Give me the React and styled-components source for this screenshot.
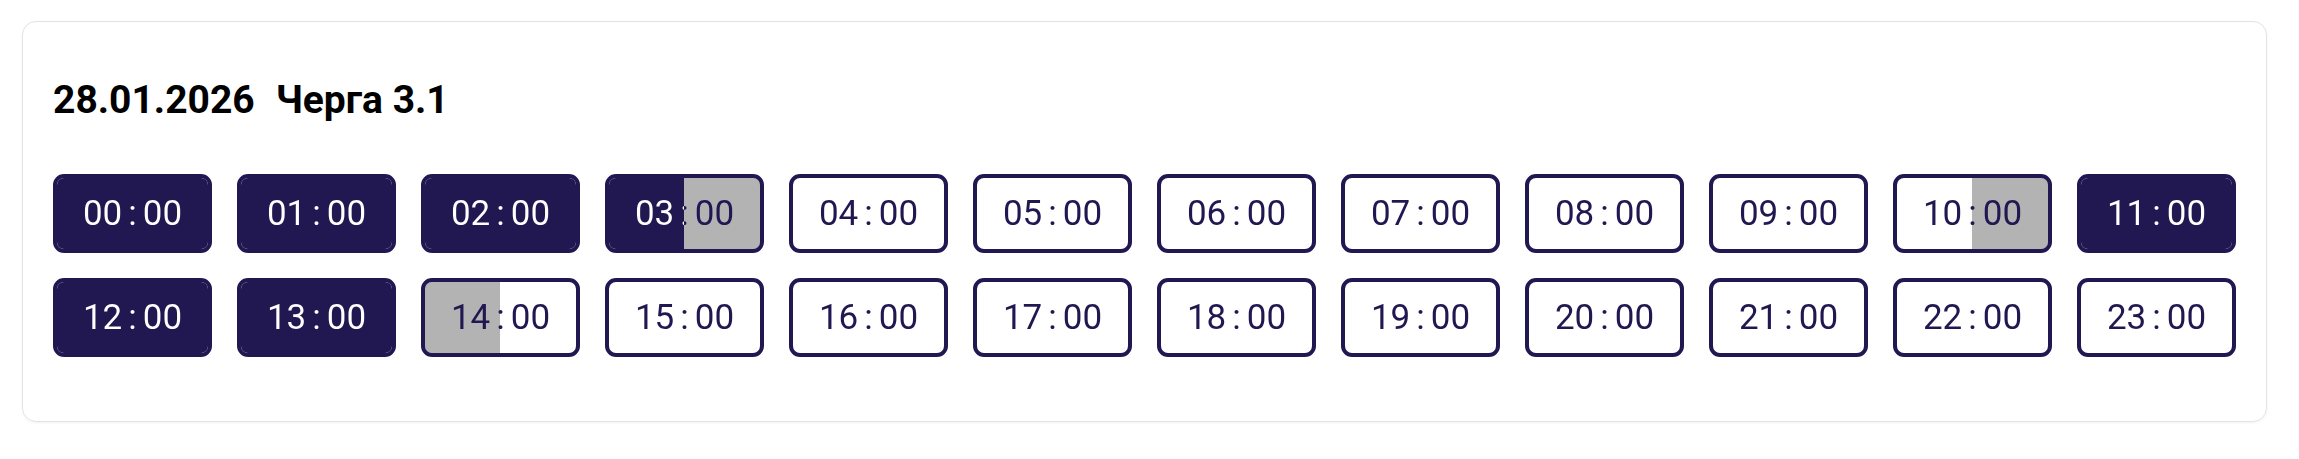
import styled, { createGlobalStyle } from "styled-components";

const NAVY = "#211852";

// fill and text colour for each half-hour state
const fills = {
  off: { bg: NAVY, fg: "#ffffff" },
  maybe: { bg: "#b3b3b3", fg: NAVY },
  on: { bg: "#ffffff", fg: NAVY }
};

const schedule = [
  ["off", "off"], ["off", "off"], ["off", "off"], ["off", "maybe"],
  ["on", "on"], ["on", "on"], ["on", "on"], ["on", "on"],
  ["on", "on"], ["on", "on"], ["on", "maybe"], ["off", "off"],
  ["off", "off"], ["off", "off"], ["maybe", "on"], ["on", "on"],
  ["on", "on"], ["on", "on"], ["on", "on"], ["on", "on"],
  ["on", "on"], ["on", "on"], ["on", "on"], ["on", "on"]
];

const GlobalStyle = createGlobalStyle`
  body {
    margin: 0;
    background: #ffffff;
    font-family: Roboto, "Noto Sans", sans-serif;
  }
`;

const Page = styled.div`
  padding: 21px 32px 21px 22px;
`;

const Card = styled.section`
  border: 1px solid #e3e3e3;
  border-radius: 14px;
  box-shadow: 0 1px 3px rgba(0, 0, 0, 0.05);
  padding: 55px 30px 64px;
`;

const Heading = styled.h2`
  display: flex;
  gap: 21px;
  margin: 0 0 51px;
  font-size: 39px;
  line-height: 46px;
  font-weight: 700;
  color: #000000;
`;

const Grid = styled.div`
  display: grid;
  grid-template-columns: repeat(12, 1fr);
  gap: 25px;
`;

const Slot = styled.div`
  height: 79px;
  box-sizing: border-box;
  border: 4px solid ${NAVY};
  border-radius: 11px;
  background: linear-gradient(
    to right,
    ${p => fills[p.$first].bg} 50%,
    ${p => fills[p.$second].bg} 50%
  );
  background-clip: padding-box;
  display: flex;
  align-items: center;
`;

const Time = styled.span`
  width: 100%;
  text-align: center;
  font-size: 35px;
  font-weight: 400;
  background: linear-gradient(
    to right,
    ${p => fills[p.$first].fg} 50%,
    ${p => fills[p.$second].fg} 50%
  );
  -webkit-background-clip: text;
  background-clip: text;
  color: transparent;
`;

const Colon = styled.span`
  margin: 0 6px;
`;

export default function App() {
  return (
    <>
      <GlobalStyle />
      <Page>
        <Card>
          <Heading>
            <span>28.01.2026</span>
            <span>Черга 3.1</span>
          </Heading>
          <Grid>
            {schedule.map(([first, second], hour) => (
              <Slot key={hour} $first={first} $second={second}>
                <Time $first={first} $second={second}>
                  {String(hour).padStart(2, "0")}
                  <Colon>:</Colon>
                  00
                </Time>
              </Slot>
            ))}
          </Grid>
        </Card>
      </Page>
    </>
  );
}
